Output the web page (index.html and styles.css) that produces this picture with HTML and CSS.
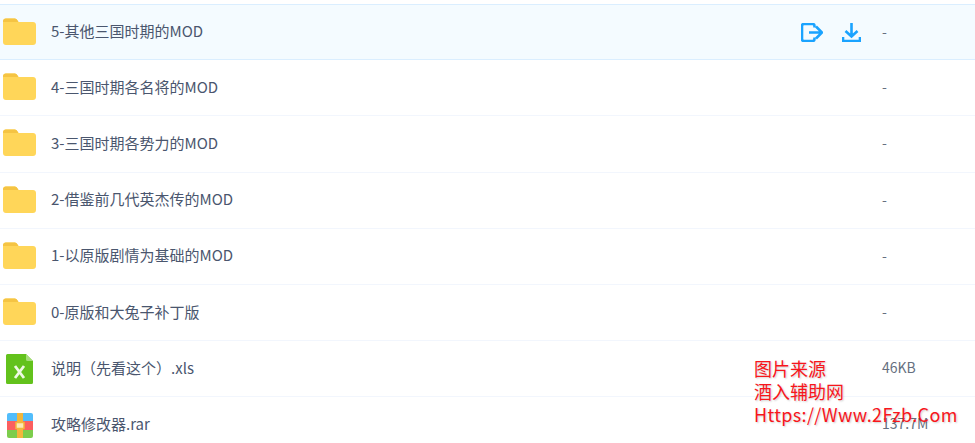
FILE: index.html
```html
<!DOCTYPE html>
<html lang="zh-CN">
<head>
  <meta charset="UTF-8" />
  <title>文件列表</title>
  <link rel="stylesheet" href="styles.css">
</head>
<body>
  <svg class="defs" width="0" height="0">
    <symbol id="folder" viewBox="0 0 33 27">
      <path d="M0 3.500C0 1.600 1.200.6 2.800.6h8.400c1.400 0 2.300.5 3 1.500L15.500 4H30c1.800 0 3 1.200 3 3v17c0 1.800-1.200 3-3 3H3c-1.800 0-3-1.200-3-3z" fill="#ffd659"/>
      <path d="M0 3.500C0 1.600 1.200.6 2.800.6h8.400c1.400 0 2.300.5 3 1.500L15.500 4H0z" fill="#f5c443"/>
    </symbol>
  </svg>

  <div class="file-list">
    <div class="row active">
      <svg class="icon-folder"><use href="#folder"/></svg>
      <span class="name">5-其他三国时期的MOD</span>
      <div class="actions">
        <svg class="action" viewBox="0 0 22 19" fill="none" stroke="#1aa3ff" stroke-width="2.600">
          <path d="M13.500 4.500V3a2 2 0 0 0-2-2H3a2 2 0 0 0-2 2v13a2 2 0 0 0 2 2h8.500a2 2 0 0 0 2-2v-1.500"/>
          <path d="M8 9.500h13M15 3.500l6 6-6 6"/>
        </svg>
        <svg class="action" viewBox="0 0 19 19" fill="none" stroke="#1aa3ff" stroke-width="2.600">
          <path d="M9.500 0v13.500M3.500 8l6 5.500 6-5.500M1 14v4h17v-4"/>
        </svg>
      </div>
      <span class="size">-</span>
    </div>
    <div class="row">
      <svg class="icon-folder"><use href="#folder"/></svg>
      <span class="name">4-三国时期各名将的MOD</span>
      <span class="size">-</span>
    </div>
    <div class="row">
      <svg class="icon-folder"><use href="#folder"/></svg>
      <span class="name">3-三国时期各势力的MOD</span>
      <span class="size">-</span>
    </div>
    <div class="row">
      <svg class="icon-folder"><use href="#folder"/></svg>
      <span class="name">2-借鉴前几代英杰传的MOD</span>
      <span class="size">-</span>
    </div>
    <div class="row">
      <svg class="icon-folder"><use href="#folder"/></svg>
      <span class="name">1-以原版剧情为基础的MOD</span>
      <span class="size">-</span>
    </div>
    <div class="row">
      <svg class="icon-folder"><use href="#folder"/></svg>
      <span class="name">0-原版和大兔子补丁版</span>
      <span class="size">-</span>
    </div>
    <div class="row">
      <div class="icon-slot">
        <svg class="icon-xls" viewBox="0 0 27 30">
          <path d="M1.500 0H20l7 7v21.500a1.500 1.500 0 0 1-1.500 1.500h-24A1.500 1.500 0 0 1 0 28.500v-27A1.500 1.500 0 0 1 1.500 0z" fill="#63c21c"/>
          <path d="M20 0l7 7h-5.500A1.500 1.500 0 0 1 20 5.500z" fill="#a5de79"/>
          <path d="M9 12L18 24M18 12L9 24" fill="none" stroke="#eef9e3" stroke-width="2.800"/>
        </svg>
      </div>
      <span class="name">说明（先看这个）.xls</span>
      <span class="size">46KB</span>
    </div>
    <div class="row">
      <div class="icon-slot">
        <svg class="icon-rar" viewBox="0 0 26 25">
          <path d="M2 0h22a2 2 0 0 1 2 2v6H0V2a2 2 0 0 1 2-2z" fill="#52bdfb"/>
          <rect y="8" width="26" height="9" fill="#fb5f5f"/>
          <path d="M0 17h26v6a2 2 0 0 1-2 2H2a2 2 0 0 1-2-2z" fill="#7ccd4c"/>
          <rect x="10" width="6" height="25" fill="#f2b63c"/>
          <rect x="9" y="9.500" width="8" height="6" fill="#fbe9b5" stroke="#f2b63c" stroke-width="1.500"/>
        </svg>
      </div>
      <span class="name">攻略修改器.rar</span>
      <span class="size">137.7M</span>
    </div>
  </div>

  <div class="watermark">
    <div>图片来源</div>
    <div>酒入辅助网</div>
    <div class="watermark-url">Https://Www.2Fzb.Com</div>
  </div>
</body>
</html>
```

FILE: styles.css
```css
* {
  margin: 0;
  padding: 0;
  box-sizing: border-box;
}

html, body {
  height: 443px;
  overflow: hidden;
}

body {
  position: relative;
  background: #fff;
  font-family: "Noto Sans CJK SC", "Noto Sans", sans-serif;
  font-size: 14px;
  color: #4a566e;
}

.defs {
  position: absolute;
}

.file-list {
  padding-top: 4px;
}

.row {
  display: flex;
  align-items: center;
  height: 56.2px;
  border-bottom: 1px solid #f2f6fd;
}

.row.active {
  background: #f4fbff;
  border-top: 1px solid #daeeff;
  border-bottom: 1px solid #daeeff;
}

.icon-folder {
  width: 33px;
  height: 27px;
  margin-left: 3px;
  margin-bottom: 2px;
  flex-shrink: 0;
}

.icon-slot {
  width: 36px;
  display: flex;
  justify-content: center;
  flex-shrink: 0;
}

.icon-xls {
  width: 27px;
  height: 30px;
  margin-left: 3px;
}

.icon-rar {
  width: 26px;
  height: 25px;
  margin-left: 3px;
  margin-top: 2px;
}

.name {
  margin-left: 15px;
  margin-bottom: 3px;
  flex: 1;
  font-size: 15px;
  white-space: nowrap;
}

.actions {
  display: flex;
  align-items: center;
  gap: 19px;
  margin-right: 21px;
  margin-top: 1px;
}

.action {
  height: 19px;
  width: 22px;
}

.action + .action {
  width: 19px;
}

.size {
  width: 93px;
  margin-bottom: 3px;
  color: #666f80;
}

.watermark {
  position: absolute;
  left: 754px;
  top: 357px;
  color: #f8161c;
  font-size: 18px;
  line-height: 23px;
  text-shadow: 1px 1px 2px rgba(0, 0, 0, 0.2);
  white-space: nowrap;
}

.watermark-url {
  letter-spacing: 0.35px;
}
```
